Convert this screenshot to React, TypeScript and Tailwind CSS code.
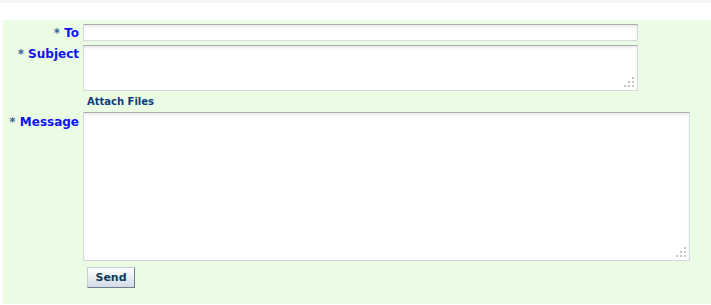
import React from "react";

const Grip = () => (
  <svg width="10" height="10" viewBox="0 0 10 10" className="absolute right-[3px] bottom-[3px]">
    <g fill="#c4c4c4">
      <rect x="8" y="0" width="2" height="2" />
      <rect x="4" y="4" width="2" height="2" />
      <rect x="8" y="4" width="2" height="2" />
      <rect x="0" y="8" width="2" height="2" />
      <rect x="4" y="8" width="2" height="2" />
      <rect x="8" y="8" width="2" height="2" />
    </g>
  </svg>
);

const boxCls =
  "relative bg-white border border-[#d6d9dc] border-t-[#a9acaf] shadow-[inset_0_2px_2px_rgba(0,0,0,0.08)]";

export default function App() {
  const font = { fontFamily: '"DejaVu Sans", Verdana, sans-serif' };
  return (
    <div className="w-[711px] h-[305px] bg-white" style={font}>
      <div className="h-[3px] bg-[#f4f5f5]" />
      <div className="h-[17px]" />
      <div className="ml-[3px] h-[284px] bg-[#eafde4] pt-[4px]">
        <div className="grid grid-cols-[80px_1fr] items-start">
          <div className="text-right pr-[4px] text-[12px] font-bold text-[#1212f0] leading-[19px] h-[17px]">
            <span className="text-[#3b5f9a]">*</span> To
          </div>
          <div className={`${boxCls} w-[555px] h-[17px]`} />
          <div className="mt-[4px] text-right pr-[4px] text-[12px] font-bold text-[#1212f0] leading-[19px]">
            <span className="text-[#3b5f9a]">*</span> Subject
          </div>
          <div className={`${boxCls} mt-[4px] w-[555px] h-[46px]`}>
            <Grip />
          </div>
          <div />
          <div className="pl-[4px] pt-[4px] h-[21px] text-[10px] font-bold text-[#0b3b7a] leading-[14px]">
            Attach Files
          </div>
          <div className="text-right pr-[4px] text-[12px] font-bold text-[#1212f0] leading-[19px] pt-[1px]">
            <span className="text-[#3b5f9a]">*</span> Message
          </div>
          <div className={`${boxCls} w-[607px] h-[149px]`}>
            <Grip />
          </div>
          <div />
          <div className="pl-[4px] pt-[6px] flex">
            <button className="w-[48px] h-[21px] border border-[#c9ced6] border-r-[#6f7c8c] border-b-[#6f7c8c] bg-gradient-to-b from-[#ffffff] to-[#d2dbe8] text-[11px] font-bold text-[#0e3a5c] leading-[18px]">
              Send
            </button>
          </div>
        </div>
      </div>
    </div>
  );
}
